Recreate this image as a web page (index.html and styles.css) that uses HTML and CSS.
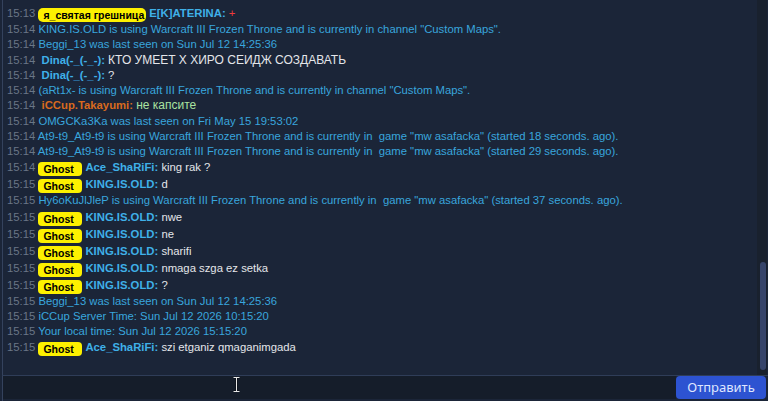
FILE: index.html
```html
<!DOCTYPE html>
<html>

<head>
    <link rel="stylesheet" href="styles.css">
</head>

<body>
    <div class="chat">
        <div class="body">
            <div class="log">
                <div class="row tall"><span class="time">15:13</span> <span class="badge wide">я_святая грешница</span><span class="name">E[K]ATERINA:</span> <span class="plus">+</span></div>
                <div class="row info"><span class="time">15:14</span> KING.IS.OLD is using Warcraft III Frozen Throne and is currently in channel "Custom Maps".</div>
                <div class="row info"><span class="time">15:14</span> Beggi_13 was last seen on Sun Jul 12 14:25:36</div>
                <div class="row"><span class="time">15:14</span> &nbsp;<span class="name">Dina(-_(-_-):</span> <span class="msg cyr">КТО УМЕЕТ Х ХИРО СЕИДЖ СОЗДАВАТЬ</span></div>
                <div class="row"><span class="time">15:14</span> &nbsp;<span class="name">Dina(-_(-_-):</span> <span class="msg">?</span></div>
                <div class="row info"><span class="time">15:14</span> (aRt1x- is using Warcraft III Frozen Throne and is currently in channel "Custom Maps".</div>
                <div class="row"><span class="time">15:14</span> &nbsp;<span class="name admin">iCCup.Takayumi:</span> <span class="msg green cyr">не капсите</span></div>
                <div class="row info"><span class="time">15:14</span> OMGCKa3Ka was last seen on Fri May 15 19:53:02</div>
                <div class="row info"><span class="time">15:14</span> At9-t9_At9-t9 is using Warcraft III Frozen Throne and is currently in &nbsp;game "mw asafacka" (started 18 seconds. ago).</div>
                <div class="row info"><span class="time">15:14</span> At9-t9_At9-t9 is using Warcraft III Frozen Throne and is currently in &nbsp;game "mw asafacka" (started 29 seconds. ago).</div>
                <div class="row tall"><span class="time">15:14</span> <span class="badge">Ghost</span><span class="name">Ace_ShaRiFi:</span> <span class="msg">king rak ?</span></div>
                <div class="row tall"><span class="time">15:15</span> <span class="badge">Ghost</span><span class="name">KING.IS.OLD:</span> <span class="msg">d</span></div>
                <div class="row info"><span class="time">15:15</span> Hy6oKuJlJleP is using Warcraft III Frozen Throne and is currently in &nbsp;game "mw asafacka" (started 37 seconds. ago).</div>
                <div class="row tall"><span class="time">15:15</span> <span class="badge">Ghost</span><span class="name">KING.IS.OLD:</span> <span class="msg">nwe</span></div>
                <div class="row tall"><span class="time">15:15</span> <span class="badge">Ghost</span><span class="name">KING.IS.OLD:</span> <span class="msg">ne</span></div>
                <div class="row tall"><span class="time">15:15</span> <span class="badge">Ghost</span><span class="name">KING.IS.OLD:</span> <span class="msg">sharifi</span></div>
                <div class="row tall"><span class="time">15:15</span> <span class="badge">Ghost</span><span class="name">KING.IS.OLD:</span> <span class="msg">nmaga szga ez setka</span></div>
                <div class="row tall"><span class="time">15:15</span> <span class="badge">Ghost</span><span class="name">KING.IS.OLD:</span> <span class="msg">?</span></div>
                <div class="row info"><span class="time">15:15</span> Beggi_13 was last seen on Sun Jul 12 14:25:36</div>
                <div class="row info"><span class="time">15:15</span> iCCup Server Time: Sun Jul 12 2026 10:15:20</div>
                <div class="row info"><span class="time">15:15</span> Your local time: Sun Jul 12 2026 15:15:20</div>
                <div class="row tall"><span class="time">15:15</span> <span class="badge">Ghost</span><span class="name">Ace_ShaRiFi:</span> <span class="msg">szi etganiz qmaganimgada</span></div>
            </div>
            <div class="scrollbar">
                <div class="thumb"></div>
            </div>
        </div>
        <div class="input-row">
            <div class="input">
                <svg class="ibeam" width="7" height="15" viewBox="0 0 7 15">
                    <path d="M0.5 0.5h6M3.5 0.5v14M0.5 14.5h6" stroke="#0b0f16" stroke-width="2.2" fill="none"/>
                    <path d="M0.5 0.5h6M3.5 0.5v14M0.5 14.5h6" stroke="#e8e8e8" stroke-width="1" fill="none"/>
                </svg>
            </div>
            <div class="send">Отправить</div>
        </div>
    </div>
</body>

</html>
```

FILE: styles.css
```css
html, body {
    margin: 0;
    padding: 0;
    background: #1b2538;
}

.chat {
    height: 401px;
    display: flex;
    flex-direction: column;
    font-family: "Liberation Sans", Arial, sans-serif;
    font-size: 11.3px;
}

.body {
    flex: 1;
    display: flex;
    border-left: 1px solid #34425d;
    margin-left: 2px;
    overflow: hidden;
}

.log {
    flex: 1;
    padding: 5px 0 0 4px;
    white-space: nowrap;
    overflow: hidden;
}

.row {
    line-height: 15.25px;
    height: 15.25px;
    color: #39a6dd;
}

.row.tall {
    height: 17px;
    line-height: 17px;
}

.time {
    color: #6a7687;
}

.badge {
    display: inline-block;
    background: #fdf100;
    color: #000;
    font-weight: bold;
    font-size: 10.5px;
    line-height: 14px;
    height: 14px;
    width: 39px;
    padding: 0 0 0 5px;
    border-radius: 4px;
    margin-right: 3px;
    vertical-align: -2px;
}

.badge.wide {
    width: auto;
    padding: 0 2px 0 5px;
    border-radius: 5px;
    margin-right: 3px;
}

.name {
    color: #3fb0e8;
    font-weight: bold;
}

.name.admin {
    color: #d86a1e;
}

.msg {
    color: #e4e6ea;
}

.msg.cyr {
    font-size: 12px;
}

.msg.green {
    color: #a9e2a0;
}

.plus {
    color: #ee3b3b;
}

.scrollbar {
    width: 10px;
    margin-right: 1px;
    background: #19212e;
    display: flex;
    flex-direction: column;
    justify-content: flex-end;
    padding-bottom: 5px;
}

.thumb {
    height: 108px;
    margin: 0 1px 0 3px;
    border-radius: 3px;
    background: #36446a;
}

.input-row {
    height: 25px;
    display: flex;
    border-top: 1px solid #2f3d58;
    border-left: 1px solid #34425d;
    margin-left: 2px;
}

.input {
    flex: 1;
    background: #151d2a;
    position: relative;
    margin-bottom: 2px;
}

.ibeam {
    position: absolute;
    left: 230px;
    top: 1px;
}

.send {
    width: 90px;
    height: 23px;
    margin-right: 2px;
    background: #2d53d1;
    color: #dfe6ff;
    border-radius: 4px;
    font-family: "Noto Sans", sans-serif;
    font-size: 13px;
    line-height: 23px;
    text-align: center;
}
```
